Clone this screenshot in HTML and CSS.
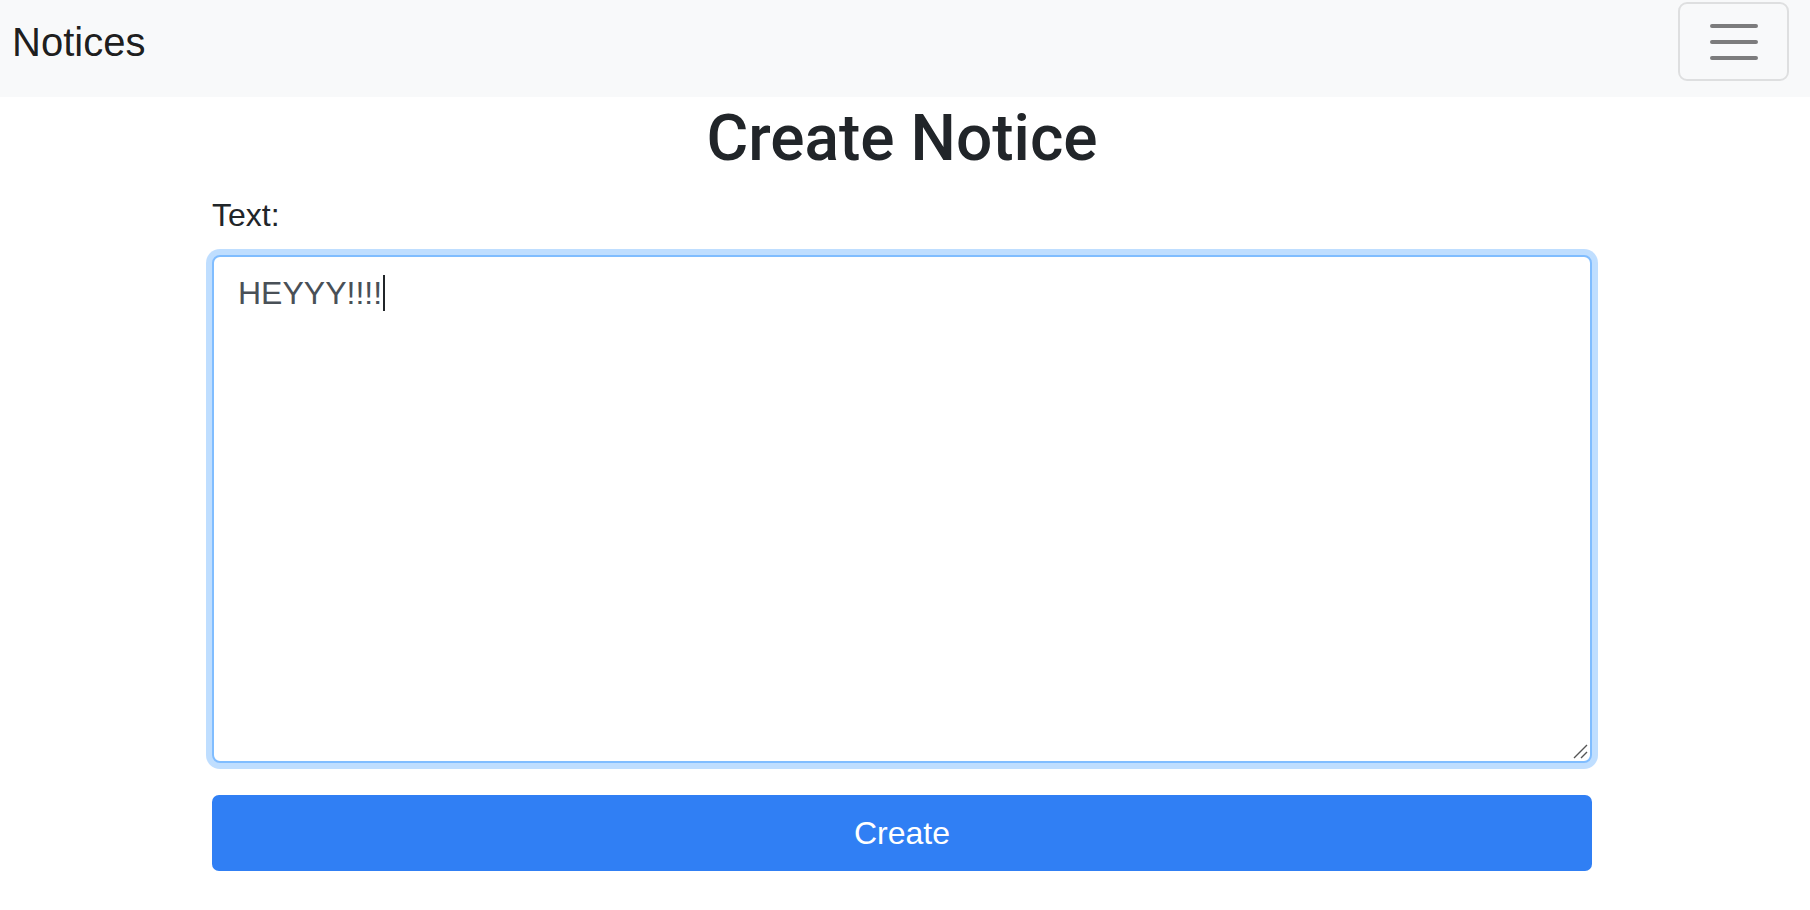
FILE: index.html
```html
<!DOCTYPE html>
<html lang="en">
<head>
<meta charset="utf-8">
<title>Notices</title>
<link rel="stylesheet" href="styles.css">
</head>
<body>
<nav class="navbar">
  <a class="brand" href="#">Notices</a>
  <button class="toggler" type="button" aria-label="Toggle navigation">
    <svg class="toggler-icon" viewBox="0 0 30 30" width="60" height="60" aria-hidden="true">
      <path d="M4 7h22M4 15h22M4 23h22" stroke="rgba(0,0,0,0.5)" stroke-width="2" stroke-linecap="round" fill="none"/>
    </svg>
  </button>
</nav>
<main class="container">
  <h2 class="title">Create Notice</h2>
  <form class="form">
    <div class="form-group">
      <label class="label" for="text">Text:</label>
      <div class="textarea" id="text" role="textbox" aria-multiline="true">HEYYY!!!!<span class="caret"></span>
        <svg class="grip" viewBox="0 0 16 16" width="16" height="16" aria-hidden="true">
          <path d="M15 2L2 15M15 9L9 15" stroke="#555" stroke-width="1.4" fill="none"/>
        </svg>
      </div>
    </div>
    <button class="btn" type="button">Create</button>
  </form>
</main>
</body>
</html>
```

FILE: styles.css
```css
* { box-sizing: border-box; }
html, body { margin: 0; padding: 0; background: #fff; }
body {
  font-family: "Liberation Sans", Arial, sans-serif;
  color: #212529;
}
.navbar {
  height: 97px;
  background: #f8f9fa;
  display: flex;
  align-items: center;
  justify-content: space-between;
  padding: 2px 21px 16px 12px;
}
.brand {
  font-size: 40px;
  line-height: 60px;
  color: rgba(0,0,0,0.9);
  text-decoration: none;
}
.toggler {
  width: 111px;
  height: 79px;
  border: 2px solid rgba(0,0,0,0.1);
  border-radius: 9px;
  background: transparent;
  display: flex;
  align-items: center;
  justify-content: center;
  padding: 0;
}
.toggler-icon { display: block; }
.container {
  width: 1380px;
  margin-left: 212px;
}
.title {
  margin: 4px 0 13px;
  font-family: Roboto, "Liberation Sans", Arial, sans-serif;
  font-size: 64px;
  line-height: 76.8px;
  font-weight: 500;
  text-align: center;
  color: #212529;
}
.form { margin: 0; }
.form-group { margin-bottom: 32px; }
.label {
  display: block;
  font-size: 32px;
  line-height: 48px;
  margin-bottom: 16px;
  color: #212529;
}
.textarea {
  position: relative;
  height: 508px;
  border: 2px solid #80bdff;
  border-radius: 8px;
  box-shadow: 0 0 0 6px rgba(0,123,255,0.25);
  padding: 12px 24px;
  font-size: 32px;
  line-height: 48px;
  color: #495057;
  background: #fff;
}
.caret {
  display: inline-block;
  width: 2px;
  height: 36px;
  background: #212529;
  vertical-align: -7px;
  margin-left: 1px;
}
.grip {
  position: absolute;
  right: 2px;
  bottom: 2px;
}
.btn {
  display: block;
  width: 100%;
  height: 76px;
  border: 0;
  border-radius: 7px;
  background: #307ff4;
  color: #fff;
  font-family: "Liberation Sans", Arial, sans-serif;
  font-size: 32px;
  line-height: 48px;
  padding: 12px 24px;
}
```
